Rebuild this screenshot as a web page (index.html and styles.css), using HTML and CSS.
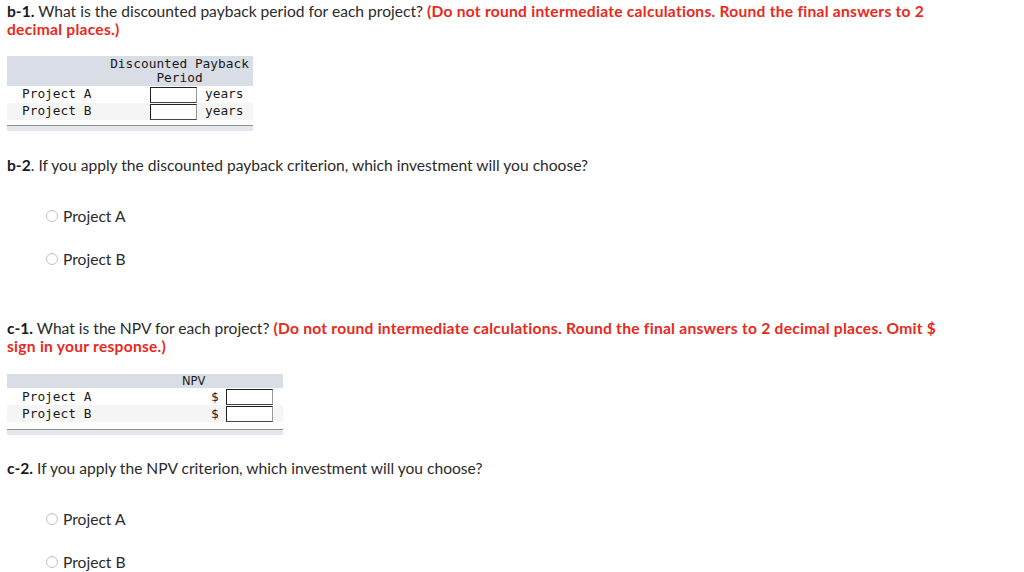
FILE: index.html
```html
<!DOCTYPE html>
<html>
<head>
<meta charset="utf-8">
<link rel="stylesheet" href="styles.css">
</head>
<body>
<div class="page">
  <p class="q q-b1"><b>b-1.</b> What is the discounted payback period for each project? <span class="hint">(Do not round intermediate calculations. Round the final answers to 2<br>decimal places.)</span></p>

  <div class="tbl tbl-dpp">
    <div class="thead">
      <div class="th-label"></div>
      <div class="th-val">Discounted Payback<br>Period</div>
    </div>
    <div class="trow">
      <div class="td-label">Project A</div>
      <div class="td-val"><span class="box"></span><span class="unit">years</span></div>
    </div>
    <div class="trow alt">
      <div class="td-label">Project B</div>
      <div class="td-val"><span class="box"></span><span class="unit">years</span></div>
    </div>
    <div class="tfoot"></div>
  </div>

  <p class="q q-b2"><b>b-2</b>. If you apply the discounted payback criterion, which investment will you choose?</p>

  <div class="choices choices-b2">
    <label class="choice"><span class="radio"></span>Project A</label>
    <label class="choice"><span class="radio"></span>Project B</label>
  </div>

  <p class="q q-c1"><b>c-1.</b> What is the NPV for each project? <span class="hint">(Do not round intermediate calculations. Round the final answers to 2 decimal places. Omit $<br>sign in your response.)</span></p>

  <div class="tbl tbl-npv">
    <div class="thead">
      <div class="th-label"></div>
      <div class="th-val npv-h">NPV</div>
    </div>
    <div class="trow">
      <div class="td-label">Project A</div>
      <div class="td-val"><span class="cur">$</span><span class="box"></span></div>
    </div>
    <div class="trow alt">
      <div class="td-label">Project B</div>
      <div class="td-val"><span class="cur">$</span><span class="box"></span></div>
    </div>
    <div class="tfoot"></div>
  </div>

  <p class="q q-c2"><b>c-2.</b> If you apply the NPV criterion, which investment will you choose?</p>

  <div class="choices choices-c2">
    <label class="choice"><span class="radio"></span>Project A</label>
    <label class="choice"><span class="radio"></span>Project B</label>
  </div>
</div>
</body>
</html>
```
FILE: styles.css
```css
html, body {
  margin: 0;
  padding: 0;
  background: #fff;
}
.page {
  padding: 2px 7px 0 7px;
  font-family: Lato, "Open Sans", sans-serif;
  font-size: 15.6px;
  line-height: 18px;
  color: #2b2b2b;
}
.q {
  margin: 0;
  white-space: nowrap;
}
.q b {
  font-weight: 700;
  color: #1a1a1a;
}
.hint {
  color: #e8291c;
  font-weight: 700;
  letter-spacing: 0.25px;
}
.tbl {
  font-family: "DejaVu Sans Mono", monospace;
  font-size: 12.8px;
  line-height: 14px;
  color: #1a1a1a;
}
.tbl-dpp {
  width: 246px;
  margin-top: 18px;
}
.tbl-npv {
  width: 276px;
  margin-top: 19px;
}
.thead {
  display: flex;
  background: #d9dde5;
  padding: 1px 0;
}
.tbl-npv .thead {
  padding: 0;
}
.th-label {
  width: 99px;
}
.th-val {
  flex: 1;
  text-align: center;
}
.npv-h {
  font-family: "DejaVu Sans", sans-serif;
  font-size: 11.5px;
  text-align: left;
  padding-left: 76px;
}
.trow {
  display: flex;
  height: 17px;
  align-items: center;
  background: #fff;
}
.trow.alt {
  background: #f5f5f5;
}
.td-label {
  width: 84px;
  padding-left: 15px;
}
.tbl-dpp .td-label,
.tbl-dpp .unit {
  margin-top: -2px;
}
.td-val {
  flex: 1;
  display: flex;
  align-items: center;
}
.tbl-dpp .td-val {
  padding-left: 44px;
}
.tbl-npv .td-val {
  padding-left: 105px;
}
.box {
  display: block;
  width: 45px;
  height: 14px;
  border: 1px solid #222;
  border-right-color: #999;
  border-bottom-color: #444;
  background: #fff;
}
.unit {
  margin-left: 8px;
}
.cur {
  width: 15px;
}
.tfoot {
  margin-top: 5px;
  height: 5px;
  border-top: 1px solid #8f8f8f;
  background: #e4e7ee;
}
.tbl-npv .tfoot {
  margin-top: 7px;
}
.q-b2 {
  margin-top: 25px;
}
.choices {
  display: flex;
  flex-direction: column;
  gap: 25px;
  padding-left: 39px;
}
.choices-b2 {
  margin-top: 33px;
}
.choice {
  display: flex;
  align-items: center;
  height: 18px;
  color: #2b2b2b;
}
.radio {
  width: 12px;
  height: 12px;
  border: 1px solid #c4c4c4;
  border-radius: 50%;
  margin-right: 5px;
  box-sizing: border-box;
  box-shadow: inset 0 1px 1px rgba(0,0,0,0.05);
}
.q-c1 {
  margin-top: 51px;
}
.q-c2 {
  margin-top: 24px;
}
.choices-c2 {
  margin-top: 33px;
}
```
